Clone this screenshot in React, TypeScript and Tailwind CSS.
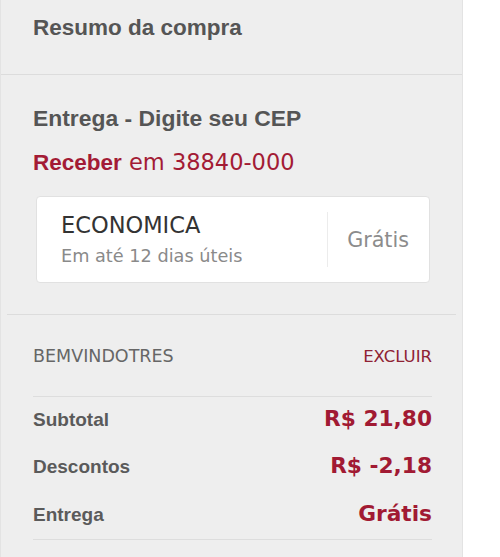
import React from "react";

const bold = { fontFamily: '"Liberation Sans", Arial, sans-serif' };
const dv = { fontFamily: '"DejaVu Sans", Verdana, sans-serif' };

export default function App() {
  return (
    <div className="w-[500px] h-[557px] bg-white overflow-hidden">
      <div className="w-[463px] h-[557px] bg-[#eeeeee] border-l border-r border-[#e3e3e3]">
        {/* Header */}
        <div className="h-[75px] border-b border-[#dcdcdc] pt-[14px] pl-[32px]">
          <div style={bold} className="text-[22.5px] leading-[28px] font-bold text-[#555555]">
            Resumo da compra
          </div>
        </div>

        {/* Delivery */}
        <div className="h-[240px] mx-[6px] border-b border-[#dcdcdc] pt-[29px] pl-[26px] pr-[25px]">
          <div style={bold} className="text-[22.9px] leading-[28px] font-bold text-[#555555]">
            Entrega - Digite seu CEP
          </div>
          <div className="mt-[16px] leading-[28px] text-[#a31b35] whitespace-nowrap">
            <span style={bold} className="text-[22.5px] font-bold">Receber</span>
            <span style={dv} className="text-[22.5px]"> em 38840-000</span>
          </div>
          <div className="mt-[18px] ml-[3px] mr-[1px] h-[87px] bg-white border border-[#e1e1e1] rounded-[4px] flex">
            <div className="flex-1 flex flex-col justify-center pl-[24px]">
              <div style={dv} className="text-[22.5px] leading-[26px] text-[#333333]">
                ECONOMICA
              </div>
              <div style={dv} className="mt-[7px] text-[17.7px] leading-[22px] text-[#8a8a8a]">
                Em até 12 dias úteis
              </div>
            </div>
            <div className="w-px my-[15px] bg-[#ececec]" />
            <div className="flex items-center pl-[19px] pr-[20px]">
              <div style={dv} className="text-[20.7px] leading-[24px] text-[#8c8c8c]">
                Grátis
              </div>
            </div>
          </div>
        </div>

        {/* Coupon & totals */}
        <div className="pl-[32px] pr-[30px]">
          <div className="pt-[30px] h-[82px] flex items-baseline justify-between border-b border-[#dddddd]">
            <span style={dv} className="text-[17.5px] leading-[22px] text-[#666666]">
              BEMVINDOTRES
            </span>
            <span style={dv} className="text-[16.5px] leading-[22px] text-[#8f2234]">
              EXCLUIR
            </span>
          </div>
          <div className="pt-[7.6px] pb-[10.4px] border-b border-[#dddddd] flex flex-col gap-[18.5px]">
            {[
              ["Subtotal", "R$ 21,80"],
              ["Descontos", "R$ -2,18"],
              ["Entrega", "Grátis"],
            ].map(([l, v]) => (
              <div key={l} className="flex items-baseline justify-between leading-[28px]">
                <span style={bold} className="text-[19px] font-bold text-[#5a5a5a]">
                  {l}
                </span>
                <span style={dv} className="text-[21.7px] font-bold text-[#a11a33]">
                  {v}
                </span>
              </div>
            ))}
          </div>
        </div>
      </div>
    </div>
  );
}
